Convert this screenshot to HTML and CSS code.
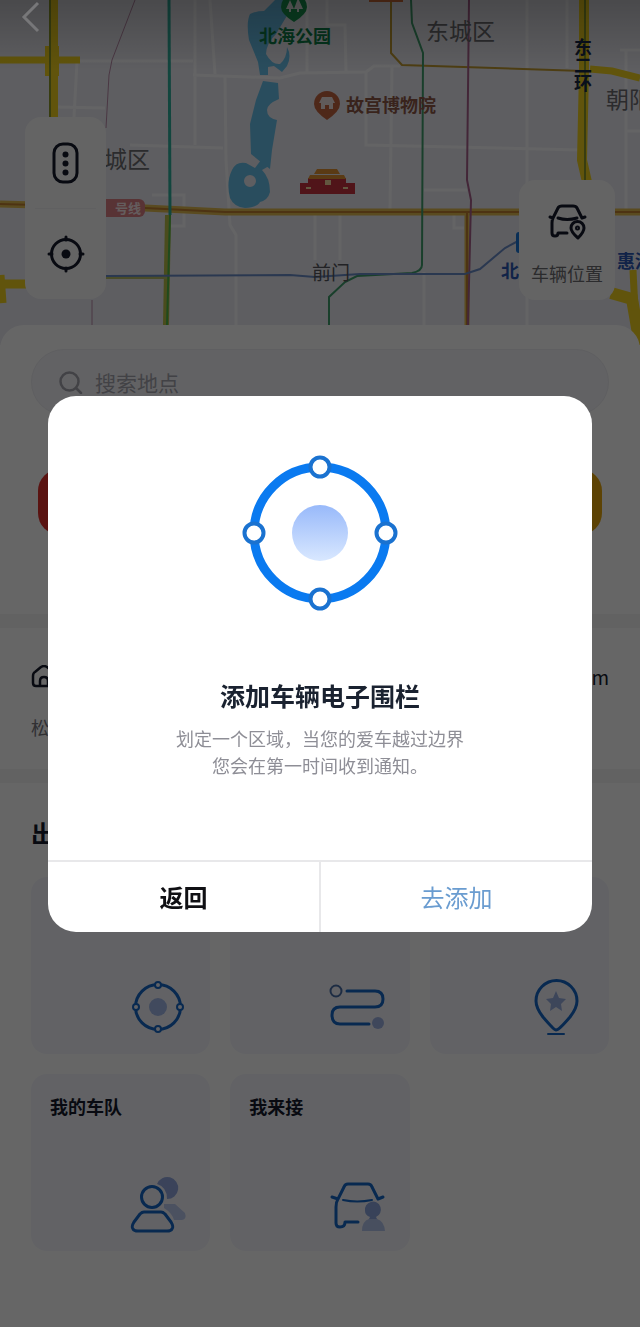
FILE: index.html
```html
<!DOCTYPE html>
<html lang="zh-CN">

<head>
    <meta charset="UTF-8">
    <meta name="viewport" content="width=device-width, initial-scale=1.0">
    <title>车辆电子围栏</title>
    <link rel="stylesheet" href="styles.css">
</head>

<body>
    <header class="map">
        <svg class="map_canvas" viewBox="0 0 640 345" preserveAspectRatio="xMidYMid slice">
            <defs>
                <linearGradient id="shade" x1="0" y1="0" x2="0" y2="1">
                    <stop offset="0" stop-color="#000" stop-opacity=".22" />
                    <stop offset="1" stop-color="#000" stop-opacity="0" />
                </linearGradient>
            </defs>
            <rect width="640" height="345" fill="#ebebf2" />

            <!-- small streets -->
            <g class="street">
                <path d="M80 61H193M195 0V145M210 0L215 74M193 75L280 78L300 73L366 72L374 66H400M77 62L74 117M57 107L105 108M130 145L223 148" />
                <path d="M225 77L226 160L230 225L236 235V325M327 0V25H345L346 72M366 72V145L580 150M392 66L390 210M527 0V325M567 0V68" />
                <path d="M626 50V210M620 50H640M626 131H640M424 190H467M340 215V260M315 215V260M424 272V325M454 213V228H464M152 195H184V226H168M307 0V72" />
            </g>

            <!-- water -->
            <g fill="#68c0ea">
                <path d="M250 14Q256 11 264 11L275 0H296L288 14L276 34Q266 44 266 54Q272 65 280 64Q287 58 287 47Q292 56 287 66L282 72L274 66L268 67V75H260L258 62L249 40Q246 22 250 14Z" />
                <path d="M263 81L278 83L279 99Q267 104 267 110Q267 118 277 120L272 150L270 169L262 163L251 154L250 124L256 100Z" />
                <path fill-rule="evenodd" d="M232 170Q236 161 246 163L255 168L261 160H270L269 166L262 170Q270 178 270 192Q268 200 260 202Q258 207 245 208Q234 207 230 198Q226 182 232 170ZM250 175A6 6 0 1 0 250 187A6 6 0 1 0 250 175Z" />
            </g>

            <!-- main roads -->
            <g fill="none" stroke="#f2d21e">
                <path stroke-width="8" d="M54 0V120" />
                <path stroke-width="14" d="M52 46V76" />
                <path stroke-width="7" d="M0 60H80" />
                <path stroke-width="10" d="M584 0V71L582 160L587 182" />
                <path stroke-width="7" d="M590 69L612 71L640 78" />
                <path stroke-width="9" d="M0 284H27M0 275L2 303" />
                <path stroke-width="12" d="M611 293L632 299L640 345" />
                <path stroke-width="7" d="M633 270L635 310" />
            </g>
            <g fill="none" stroke="#e2bb50">
                <path stroke-width="7" d="M0 204L145 208L225 212H640" />
                <path stroke-width="5" d="M467 212V325" />
            </g>
            <path fill="none" stroke="#b9bf4a" stroke-width="6" d="M168 215L166 325" />
            <path fill="none" stroke="#b9bf6a" stroke-width="4" d="M106 277H168" />

            <!-- metro lines -->
            <g fill="none" stroke-width="2">
                <path stroke="#c08030" d="M0 204L145 208L225 212H640M467 212V325" />
                <path stroke="#c09a30" d="M391 0V53L402 65L583 71" />
                <path stroke="#8c9a28" d="M50 0V117M585 0V180" />
                <path stroke="#2fae9c" stroke-width="3" d="M169 0L170 215" />
                <path stroke="#4fb84a" d="M170 215L167 325" />
                <path stroke="#3f9e6c" d="M411 0L412 23L423 53L422 265Q422 271 412 273L357 276L345 282L329 297V325" />
                <path stroke="#a8608c" d="M469 0L467 180L471 200L468 325" />
                <path stroke="#b98aa8" stroke-width="1" d="M135 0L112 60L109 75L106 128M92 300V325" />
                <path stroke="#6a8cc8" d="M106 276L290 275L315 277L360 274H465L480 269L505 248L520 240" />
            </g>
            <rect x="95" y="199" width="50" height="18" rx="6" fill="#dc7f84" />
            <rect x="369" y="-2" width="34" height="4" fill="#d8703c" />
            <rect x="516" y="232" width="8" height="21" rx="3" fill="#1976d8" />

            <!-- landmarks -->
            <path fill="#189a52" d="M281 7A13 13 0 1 1 307 7Q307 14 294 22Q281 14 281 7Z" />
            <path fill="#eee" d="M290 0L294 9H291V12H289V9H286ZM298 -2L303 9H299V12H297V9H294Z" />
            <path fill="#c46440" d="M314 104A13 13 0 1 1 340 104Q340 111 327 120Q314 111 314 104Z" />
            <path fill="#f0e4e0" d="M322 97H332L335 103H333V109H329V105H325V109H321V103H319Z" />
            <path fill="#c93440" d="M300 183H355V194H300ZM308 178H346V183H308Z" />
            <path fill="#e09232" d="M317 169H337L340 174H314ZM310 175H344L346 179H308Z" />
            <path fill="#f4d9a0" d="M325 180H331V185H325ZM306 187H311V189H306ZM343 187H348V189H343Z" />

            <g class="place">
                <text class="park" x="259" y="43">北海公园</text>
                <text class="district" x="426" y="40">东城区</text>
                <text class="district" x="606" y="108">朝阳</text>
                <text class="district" x="104" y="168">城区</text>
                <text class="museum" x="346" y="112">故宫博物院</text>
                <text class="gate" x="312" y="280">前门</text>
                <text class="station" x="501" y="278">北</text>
                <text class="station" x="617" y="268">惠河</text>
                <text class="line" x="115" y="213">号线</text>
                <text class="ring" x="583" y="38">东二环</text>
            </g>
            <rect width="640" height="70" fill="url(#shade)" />
        </svg>

        <div class="map_tools">
            <button type="button" class="tool" aria-label="路况">
                <svg width="40" height="44" viewBox="0 0 40 44">
                    <rect x="8" y="3" width="23" height="38" rx="9" fill="none" stroke="#161a2c" stroke-width="3" />
                    <circle cx="19.500" cy="13.500" r="3" fill="#161a2c" />
                    <circle cx="19.500" cy="22.500" r="3" fill="#161a2c" />
                    <circle cx="19.500" cy="31.500" r="3" fill="#161a2c" />
                </svg>
            </button>
            <button type="button" class="tool" aria-label="定位">
                <svg width="40" height="40" viewBox="0 0 40 40" fill="none" stroke="#161a2c" stroke-width="3" stroke-linecap="round">
                    <circle cx="20" cy="20" r="14.500" />
                    <circle cx="20" cy="20" r="4.500" fill="#161a2c" stroke="none" />
                    <path d="M20 3V6M20 34V37M3 20H6M34 20H37" />
                </svg>
            </button>
        </div>

        <button type="button" class="car_place">
            <svg width="40" height="38" viewBox="0 0 40 38" fill="none" stroke="#161a2c" stroke-width="3" stroke-linecap="round" stroke-linejoin="round">
                <path d="M3 14L6 15L11 5Q12 3 15 3H26Q29 3 30 5L35 15L38 14M6 15Q5 17 5 20V30Q5 33 8 33Q11 33 11 30H20M11 15Q20 18 30 15" />
                <path d="M31 35Q24 29 24 25A6.500 6.500 0 0 1 37 25Q37 29 31 35Z" />
                <circle cx="30.500" cy="25" r="1" />
            </svg>
            <span>车辆位置</span>
        </button>
    </header>

    <main class="panel">
        <section class="find">
            <div class="search">
                <svg width="24" height="24" viewBox="0 0 24 24" fill="none" stroke="#a6a6ae" stroke-width="2.500" stroke-linecap="round">
                    <circle cx="10.500" cy="11.500" r="9" />
                    <path d="M17 18L22 23" />
                </svg>
                <input type="search" class="search_input" placeholder="搜索地点" aria-label="搜索地点">
            </div>
            <div class="shortcuts">
                <button type="button" class="shortcut red" aria-label="收藏"></button>
                <button type="button" class="shortcut yellow" aria-label="更多"></button>
            </div>
        </section>

        <section class="home">
            <div class="home_row">
                <svg width="26" height="24" viewBox="0 0 26 24" fill="none" stroke="#161a2c" stroke-width="2.500" stroke-linejoin="round">
                    <path d="M2 11Q2 8 4 7L10 2Q13 0 16 2L22 7Q24 8 24 11V18Q24 21 21 21H5Q2 21 2 18Z" />
                    <path d="M9 21V16Q9 12 13 12Q17 12 17 16V21" />
                </svg>
                <span>m</span>
            </div>
            <p class="home_address">松</p>
        </section>

        <section class="services">
            <h2>出</h2>
            <div class="cards">
                <a href="#" class="card" aria-label="电子围栏">
                    <svg class="card_icon" viewBox="0 0 56 56" fill="none" stroke="#1668c8" stroke-width="2">
                        <circle cx="29" cy="28" r="9" fill="#a3b9ea" stroke="none" />
                        <circle cx="29" cy="28" r="22.500" stroke-width="3" />
                        <g fill="#f5f6fd">
                            <circle cx="29" cy="6" r="3" />
                            <circle cx="51" cy="28" r="3" />
                            <circle cx="29" cy="50" r="3" />
                            <circle cx="7" cy="28" r="3" />
                        </g>
                    </svg>
                </a>
                <a href="#" class="card" aria-label="轨迹">
                    <svg class="card_icon" viewBox="0 0 56 56" fill="none" stroke="#1668c8" stroke-width="3" stroke-linecap="round">
                        <circle cx="7" cy="12" r="5.500" stroke="#4a6ea8" stroke-width="2" />
                        <path d="M18 12H46Q54 12 54 20Q54 28 46 28H11Q3 28 3 36Q3 45 11 45H40" />
                        <circle cx="49" cy="44" r="6" fill="#9fb2e4" stroke="none" />
                    </svg>
                </a>
                <a href="#" class="card" aria-label="地点">
                    <svg class="card_icon" viewBox="0 0 56 56" fill="none" stroke="#1668c8" stroke-width="3" stroke-linecap="round">
                        <path d="M28 51Q26 51 15 38Q8 29 8 22A20.500 20.500 0 0 1 49 22Q49 29 42 38Q31 51 28 51Z" />
                        <path d="M20 55H36" stroke-width="2" />
                        <path fill="#98aee2" stroke="none" d="M28 12L31 19L38 20L33 25L34 32L28 28L22 32L23 25L18 20L25 19Z" />
                    </svg>
                </a>
                <a href="#" class="card">
                    <span>我的车队</span>
                    <svg class="card_icon" viewBox="0 0 56 56" fill="none" stroke="#1668c8" stroke-width="3" stroke-linejoin="round">
                        <path fill="#94a9e0" stroke="none" d="M28 8A11 11 0 1 1 38 23Q38 11 28 8Z" />
                        <path fill="#bccaf0" stroke="none" d="M35 28H46L56 37Q58 43 53 44H45Q43 37 35 32Z" />
                        <circle cx="23" cy="21" r="10.500" />
                        <path d="M15 36H32Q34 36 36 38L42 46Q45 51 43 53Q42 55 38 55H9Q5 55 4 53Q2 51 5 46L11 38Q13 36 15 36Z" />
                    </svg>
                </a>
                <a href="#" class="card">
                    <span>我来接</span>
                    <svg class="card_icon" viewBox="0 0 56 56" fill="none" stroke="#1668c8" stroke-width="3" stroke-linecap="round" stroke-linejoin="round">
                        <path d="M3 21L9 23L15 11Q16 8 19 8H39Q42 8 43 11L49 23L54 21M9 23Q7 26 7 31V47Q7 51 11 51Q16 51 16 46H29" />
                        <path d="M14 24Q28 27 43 24" stroke-width="2" />
                        <path fill="#8da6de" stroke="none" d="M36 35A8 8 0 1 1 47 41L49 45H39L41 41Q36 39 36 35Z" />
                        <path fill="#b4c5ee" stroke="none" d="M33 55Q33 45 40 43H48Q55 45 56 55Z" />
                    </svg>
                </a>
            </div>
        </section>
    </main>

    <div class="overlay">
        <div class="dialog" role="dialog" aria-modal="true" aria-labelledby="dialog_title">
            <div class="dialog_body">
                <svg width="156" height="156" viewBox="0 0 156 156" fill="none">
                    <defs>
                        <linearGradient id="core" x1="0" y1="0" x2="0" y2="1">
                            <stop offset="0" stop-color="#98b9fa" />
                            <stop offset="1" stop-color="#d9e8ff" />
                        </linearGradient>
                    </defs>
                    <circle cx="78" cy="78" r="28" fill="url(#core)" />
                    <circle cx="78" cy="78" r="66" stroke="#0a7af0" stroke-width="9" />
                    <g fill="#fff" stroke="#1a72d0" stroke-width="4">
                        <circle cx="78" cy="12" r="9.500" />
                        <circle cx="144" cy="78" r="9.500" />
                        <circle cx="78" cy="144" r="9.500" />
                        <circle cx="12" cy="78" r="9.500" />
                    </g>
                </svg>
                <h1 id="dialog_title">添加车辆电子围栏</h1>
                <p>划定一个区域，当您的爱车越过边界<br>您会在第一时间收到通知。</p>
            </div>
            <div class="dialog_buttons">
                <button type="button" class="btn">返回</button>
                <button type="button" class="btn go">去添加</button>
            </div>
        </div>
    </div>

    <button type="button" class="back" aria-label="后退">
        <svg width="24" height="34" viewBox="0 0 24 34" fill="none" stroke="#777779" stroke-width="3">
            <path d="M19 3L5 17L19 31" />
        </svg>
    </button>
</body>

</html>
```
FILE: styles.css
```css
* {
    box-sizing: border-box;
}

body {
    margin: 0;
    background: #fff;
    color: #161a2c;
    font-family: "Noto Sans CJK SC", "Noto Sans", sans-serif;
}

h1,
h2,
p {
    margin: 0;
}

button {
    padding: 0;
    border: 0;
    background: none;
    font-family: inherit;
    cursor: pointer;
}

svg {
    display: block;
}

/* map */
.map {
    position: relative;
    height: 345px;
}

.map_canvas {
    width: 100%;
    height: 100%;
}

.street {
    fill: none;
    stroke: #fafafc;
    stroke-width: 3;
}

.place text {
    font-size: 18px;
    font-weight: 500;
}

.place .district {
    font-size: 23px;
    font-weight: 400;
    fill: #6c6c70;
}

.place .park {
    font-weight: 700;
    fill: #0c8048;
}

.place .museum {
    font-weight: 700;
    fill: #8e5848;
}

.place .gate {
    font-size: 19px;
    font-weight: 400;
    fill: #55555c;
}

.place .station {
    font-weight: 700;
    fill: #2c58b4;
}

.place .line {
    font-size: 13px;
    font-weight: 700;
    fill: #fbe9ea;
}

.place .ring {
    font-weight: 700;
    fill: #182848;
    writing-mode: vertical-rl;
}

.map_tools,
.car_place {
    position: absolute;
    border-radius: 16px;
    background: #fafafa;
}

.map_tools {
    top: 117px;
    left: 25px;
    width: 81px;
    padding: 0 10px;
}

.tool {
    display: flex;
    align-items: center;
    justify-content: center;
    width: 100%;
    height: 91px;
}

.tool + .tool {
    border-top: 1px solid #f0f0f2;
}

.car_place {
    top: 180px;
    right: 25px;
    display: flex;
    flex-direction: column;
    align-items: center;
    gap: 20px;
    width: 96px;
    padding: 23px 0 14px;
    color: #6c6c70;
    font-size: 18px;
    line-height: 25px;
}

.back {
    position: absolute;
    top: 0;
    left: 19px;
    z-index: 3;
}

/* bottom panel */
.panel {
    position: relative;
    margin-top: -20px;
    border-radius: 24px 24px 0 0;
    background: #fff;
}

.find {
    padding: 24px 31px 79px;
    border-bottom: 14px solid #f5f5f6;
}

.search {
    display: flex;
    align-items: center;
    gap: 12px;
    height: 66px;
    padding: 0 27px;
    border: 1px solid #ededf2;
    border-radius: 33px;
    background: #f5f5fa;
}

.search_input {
    flex: 1;
    min-width: 0;
    padding: 0;
    border: 0;
    background: none;
    color: #161a2c;
    font-family: inherit;
    font-size: 21px;
    line-height: 32px;
}

.search_input::placeholder {
    color: #a6a6ae;
}

.shortcuts {
    display: flex;
    justify-content: space-between;
    margin-top: 54px;
    padding: 0 7px;
}

.shortcut {
    width: 66px;
    height: 66px;
    border-radius: 22px;
}

.shortcut.red {
    background: #e0302c;
}

.shortcut.yellow {
    background: #e8a80c;
}

.home {
    padding: 37px 31px 30px;
    border-bottom: 14px solid #f5f5f6;
}

.home_row {
    display: flex;
    align-items: center;
    justify-content: space-between;
    font-size: 19px;
    line-height: 24px;
}

.home_address {
    margin-top: 26px;
    color: #78787f;
    font-size: 18px;
    line-height: 24px;
}

.services {
    padding: 34px 31px 76px;
}

.services h2 {
    font-size: 24px;
    line-height: 32px;
}

.cards {
    display: grid;
    grid-template-columns: repeat(3, 1fr);
    gap: 20px;
    margin-top: 28px;
}

.card {
    display: flex;
    flex-direction: column;
    justify-content: space-between;
    height: 177px;
    padding: 19px 25px 19px 19px;
    border-radius: 16px;
    background: #f5f6fd;
    color: #161a2c;
    font-size: 18px;
    font-weight: 700;
    line-height: 26px;
    text-decoration: none;
}

.card_icon {
    width: 56px;
    height: 56px;
    margin-top: auto;
    margin-left: auto;
    overflow: visible;
}

/* dialog */
.overlay {
    position: fixed;
    inset: 0;
    z-index: 2;
    display: flex;
    align-items: center;
    justify-content: center;
    padding: 0 48px;
    background: rgba(0, 0, 0, 0.6);
}

.dialog {
    width: 100%;
    border-radius: 28px;
    background: #fff;
    overflow: hidden;
}

.dialog_body {
    display: flex;
    flex-direction: column;
    align-items: center;
    padding: 59px 24px 81px;
    text-align: center;
}

.dialog_body h1 {
    margin-top: 66px;
    color: #1a2230;
    font-size: 25px;
    line-height: 36px;
}

.dialog_body p {
    margin-top: 12px;
    color: #8e8e96;
    font-size: 18px;
    line-height: 27px;
}

.dialog_buttons {
    display: flex;
    border-top: 2px solid #e8e8ea;
}

.btn {
    flex: 1;
    height: 70px;
    color: #101014;
    font-size: 24px;
    font-weight: 700;
}

.btn.go {
    border-left: 2px solid #e8e8ea;
    color: #6a9cd0;
    font-weight: 400;
}
```
